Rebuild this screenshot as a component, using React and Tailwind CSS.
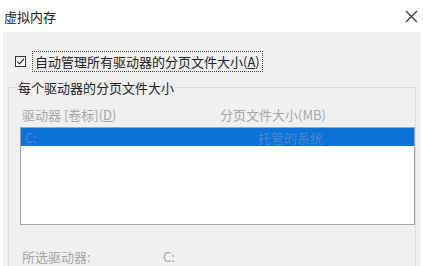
const App = () => {
  return (
    <div className="w-[423px] h-[266px] overflow-hidden bg-white text-[13px] leading-[19px] text-[#222] font-['Noto_Sans_CJK_SC','Microsoft_YaHei',sans-serif]">
      {/* title bar */}
      <div className="h-[32px] flex items-center justify-between pl-[4px] pr-[5px]">
        <span className="text-[#1a1a1a]">虚拟内存</span>
        <svg width="13" height="13" viewBox="0 0 13 13">
          <path d="M1 1 L12 12 M12 1 L1 12" stroke="#333" strokeWidth="1.1" fill="none" />
        </svg>
      </div>

      <div className="mx-[3px] h-[234px] bg-[#f0f0f0] pt-[19px]">
        <div className="flex items-center h-[21px] pl-[12px]">
          <span className="w-[11px] h-[11px] border border-[#333] bg-white flex items-center justify-center">
            <svg width="9" height="9" viewBox="0 0 9 9">
              <path d="M1.2 4.6 L3.5 6.9 L7.9 1.8" stroke="#222" strokeWidth="1.1" fill="none" />
            </svg>
          </span>
          <span className="ml-[6px] h-[21px] px-[2px] flex items-center border border-dotted border-[#444]">
            自动管理所有驱动器的分页文件大小(<span className="underline">A</span>)
          </span>
        </div>

        <fieldset className="mt-[6px] ml-[5px] w-[408px] h-[200px] border border-[#dcdcdc]">
          <legend className="ml-[8px] px-[1px] text-[#222]">每个驱动器的分页文件大小</legend>
          <div className="flex mt-[8px] text-[#a6a6a6]">
            <span className="ml-[13px] w-[198px]">驱动器 [卷标](<span className="underline">D</span>)</span>
            <span>分页文件大小(MB)</span>
          </div>
          <div className="mt-[3px] ml-[11px] h-[98px] border border-[#a6a6a6] bg-white">
            <div className="h-[18px] bg-[#0a73d6] flex items-center text-[#4a86cf]">
              <span className="ml-[4px] w-[233px]">C:</span>
              <span>托管的系统</span>
            </div>
          </div>
          <div className="flex mt-[22px] text-[#a6a6a6]">
            <span className="ml-[13px] w-[141px]">所选驱动器:</span>
            <span>C:</span>
          </div>
        </fieldset>
      </div>
    </div>
  );
};

export default App;
